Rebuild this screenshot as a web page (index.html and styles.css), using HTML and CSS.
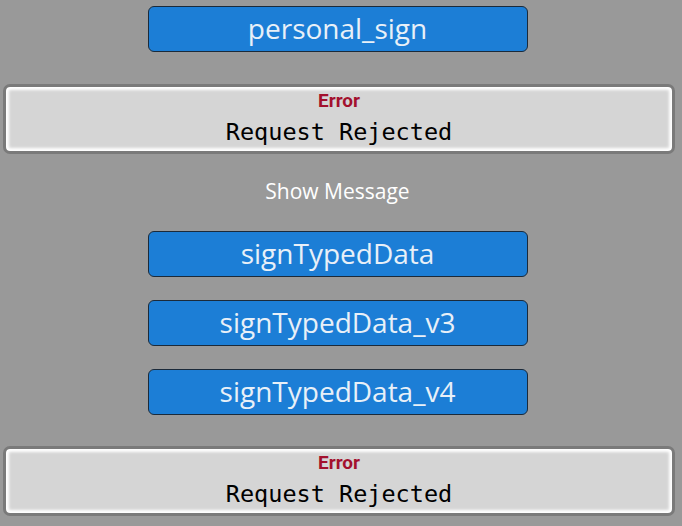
FILE: index.html
```html
<!DOCTYPE html>
<html>
<head>
<meta charset="utf-8">
<link rel="stylesheet" href="styles.css">
</head>
<body>
<main class="page">
  <button class="action">personal_sign</button>
  <div class="result">
    <div class="result-title">Error</div>
    <div class="result-body">Request Rejected</div>
  </div>
  <div class="link">Show Message</div>
  <button class="action">signTypedData</button>
  <button class="action">signTypedData_v3</button>
  <button class="action action-last">signTypedData_v4</button>
  <div class="result">
    <div class="result-title">Error</div>
    <div class="result-body">Request Rejected</div>
  </div>
</main>
</body>
</html>
```
FILE: styles.css
```css
html, body {
  margin: 0;
  padding: 0;
  background: #999999;
}
.page {
  box-sizing: border-box;
  width: 675px;
  display: flex;
  flex-direction: column;
  align-items: center;
  padding-top: 6px;
}
.action {
  box-sizing: border-box;
  width: 380px;
  height: 46px;
  margin: 0 0 23px 0;
  padding: 0 0 3px 0;
  background: #1c7ed6;
  border: 1px solid #1b2a3a;
  border-radius: 6px;
  color: #e8f0f8;
  font-family: "Open Sans", Lato, sans-serif;
  font-size: 28px;
  font-weight: 500;
  line-height: 1;
}
.page > .action:first-child {
  margin-bottom: 32px;
}
.page > .action-last {
  margin-bottom: 31px;
}
.result {
  box-sizing: border-box;
  align-self: stretch;
  margin: 0 0 0 3px;
  height: 70px;
  padding: 4px 0 5px 0;
  background: #d5d5d5;
  border: 3px solid #7a7a7a;
  border-radius: 7px;
  box-shadow: inset 0 0 3px 3px #ffffff;
  text-align: center;
}
.result-title {
  font-family: "Liberation Sans Narrow", Roboto, sans-serif;
  font-weight: bold;
  font-size: 19px;
  line-height: 20px;
  color: #a3112e;
}
.result-body {
  margin-top: 8px;
  font-family: "DejaVu Sans Mono", monospace;
  font-size: 23.5px;
  line-height: 26px;
  color: #000000;
}
.link {
  margin: 25px 0 28px 0;
  font-family: "Open Sans", Lato, sans-serif;
  font-size: 21px;
  line-height: 24px;
  color: #ffffff;
}
```
